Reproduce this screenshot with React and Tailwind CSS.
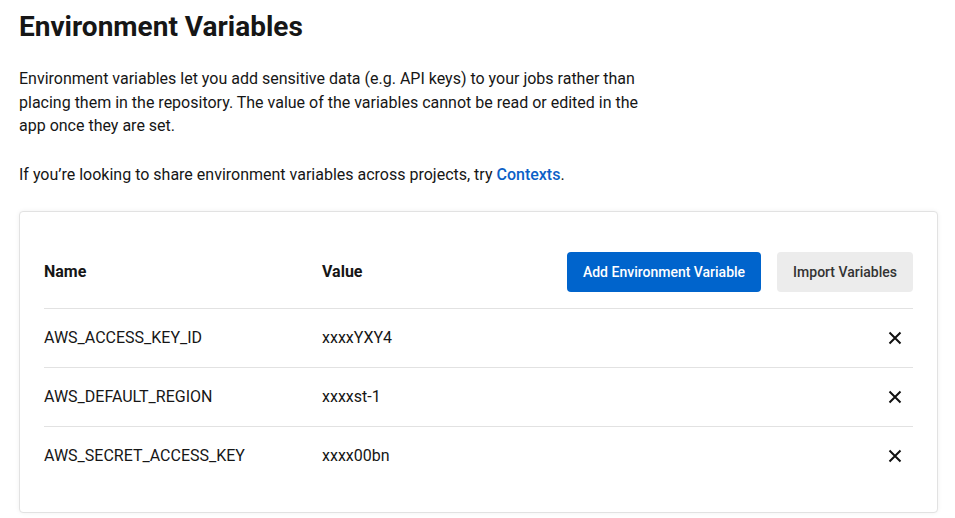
import React from 'react';

const variables = [
    { name: 'AWS_ACCESS_KEY_ID', value: 'xxxxYXY4' },
    { name: 'AWS_DEFAULT_REGION', value: 'xxxxst-1' },
    { name: 'AWS_SECRET_ACCESS_KEY', value: 'xxxx00bn' },
];

function CloseIcon() {
    return (
        <svg width="14" height="14" viewBox="0 0 14 14" fill="none">
            <path d="M1.5 1.5 L12.5 12.5 M12.5 1.5 L1.5 12.5" stroke="#111" strokeWidth="2" />
        </svg>
    );
}

export default function App() {
    return (
        <div className="min-h-screen bg-white px-[19px] pt-[10px] text-[#161616] font-['Roboto',sans-serif]">
            {/* Page heading */}
            <h1 className="text-[28px] leading-[34px] font-bold">Environment Variables</h1>

            <p className="mt-[23px] max-w-[625px] text-base leading-[23.6px]">
                Environment variables let you add sensitive data (e.g. API keys) to your jobs rather than placing them in the repository. The value of the variables cannot be read or edited in the app once they are set.
            </p>

            <p className="mt-[25px] text-base leading-6">
                If you’re looking to share environment variables across projects, try{' '}
                <a href="#" className="font-medium text-[#0c5fc7]">Contexts</a>.
            </p>

            {/* Variables card */}
            <div className="mt-[24px] w-[919px] rounded border border-[#e2e2e2] bg-white px-6 pt-10 pb-[27px] shadow-[0_0_5px_rgba(0,0,0,0.06)]">
                <div className="flex items-center h-10 mb-4">
                    <div className="w-[278px] font-bold">Name</div>
                    <div className="flex-1 font-bold">Value</div>
                    <div className="flex gap-4">
                        <button className="h-10 px-4 rounded bg-[#0064cc] text-white text-sm font-medium">Add Environment Variable</button>
                        <button className="h-10 px-4 rounded bg-[#ececec] text-[#333] text-sm font-medium">Import Variables</button>
                    </div>
                </div>

                {variables.map((v) => (
                    <div key={v.name} className="flex items-center h-[59px] border-t border-[#e2e2e2]">
                        <div className="w-[278px]">{v.name}</div>
                        <div className="flex-1">{v.value}</div>
                        <button className="w-9 h-9 flex items-center justify-center">
                            <CloseIcon />
                        </button>
                    </div>
                ))}
            </div>
        </div>
    );
}
